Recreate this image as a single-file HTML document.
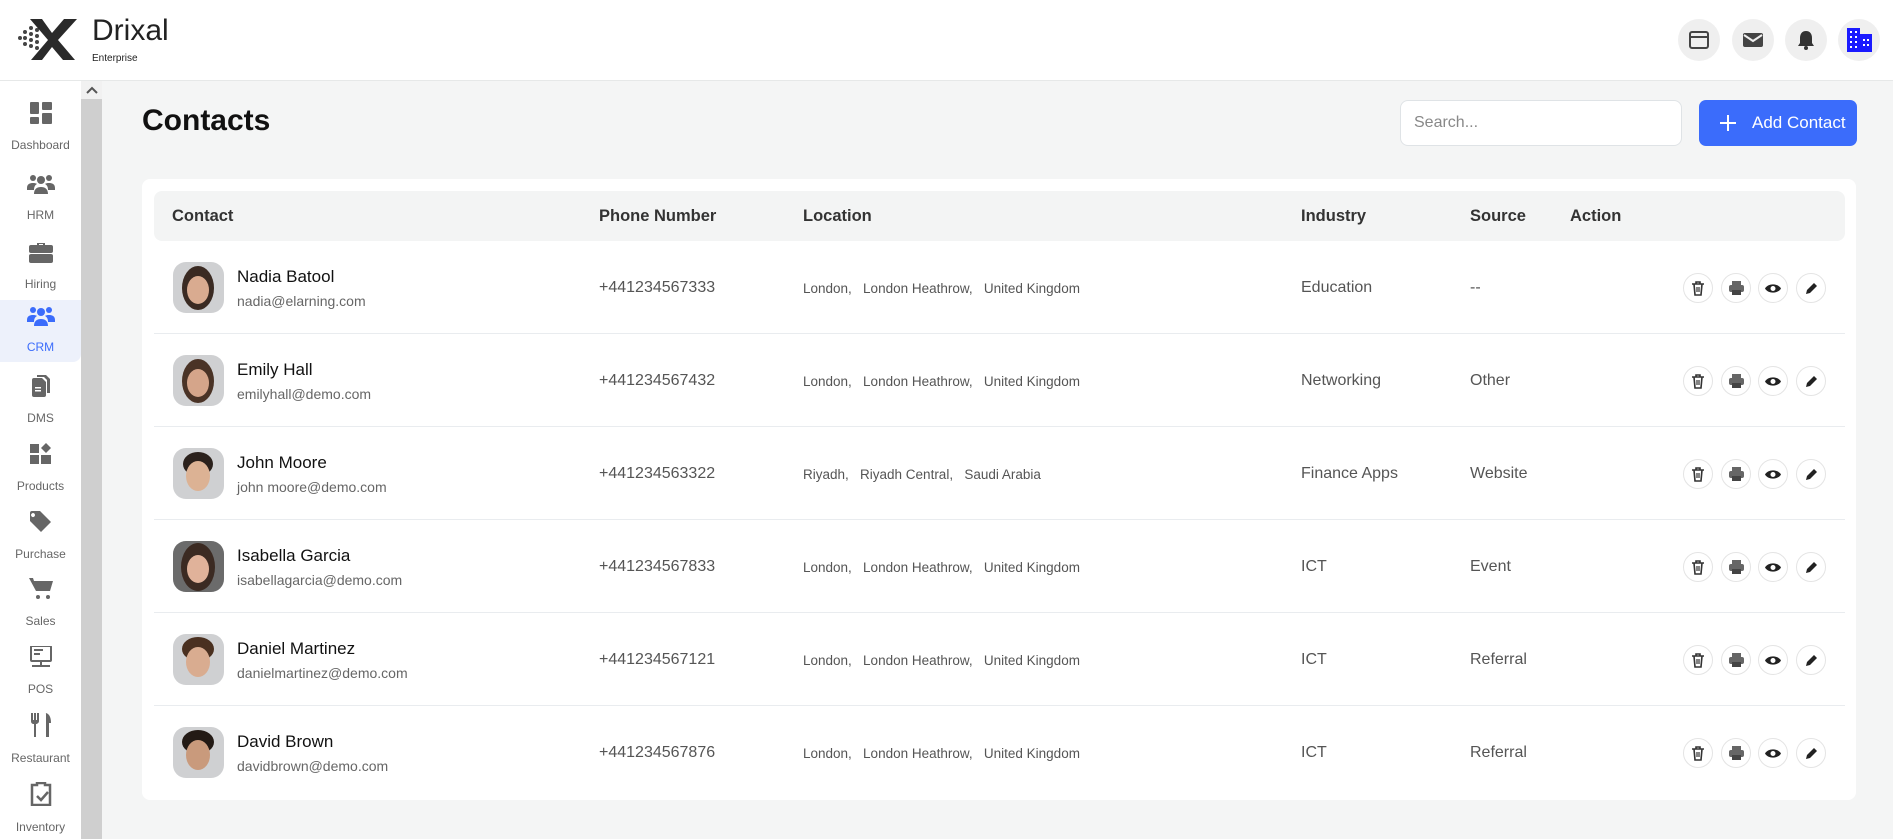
<!DOCTYPE html>
<html><head><meta charset="utf-8"><style>
*{box-sizing:border-box;margin:0;padding:0}
body{width:1893px;height:839px;overflow:hidden;background:#f4f5f5;font-family:"Liberation Sans",sans-serif;position:relative;color:#222}
.abs{position:absolute}
#hdr{left:0;top:0;width:1893px;height:81px;background:#fff;border-bottom:1px solid #e6e8e8}
.hic{width:42px;height:42px;border-radius:50%;background:#efefef;top:19px;display:flex;align-items:center;justify-content:center}
#side{left:0;top:81px;width:81px;height:758px;background:#fff}
#sb{left:81px;top:81px;width:21px;height:758px;background:#cfcfcf}
.si{position:absolute;left:0;width:81px;text-align:center;font-size:12px;color:#666}
.si svg{display:block;margin:0 auto 14px}
#card{left:142px;top:179px;width:1714px;height:621px;background:#fff;border-radius:8px}
#th{left:154px;top:191px;width:1691px;height:50px;background:#f3f4f4;border-radius:8px;font-weight:bold;font-size:16.5px;color:#333}
#th span{position:absolute;top:16px}
.row{position:absolute;left:154px;width:1691px;height:93px;border-bottom:1px solid #e9ecef}
.av{position:absolute;left:19px;top:21px;width:51px;height:51px;border-radius:13px;background:#cfd0d2;overflow:hidden}
.nm{position:absolute;left:83px;top:26px;font-size:17px;color:#111}
.em{position:absolute;left:83px;top:52px;font-size:14px;color:#666}
.ph{position:absolute;left:445px;top:38px;font-size:16px;color:#555}
.lo{position:absolute;left:649px;top:40px;font-size:13.5px;color:#555}
.in{position:absolute;left:1147px;top:38px;font-size:16px;color:#555}
.so{position:absolute;left:1316px;top:38px;font-size:16px;color:#555}
.ab{position:absolute;top:32px;width:30px;height:30px;border-radius:50%;border:1px solid #e4e4e4;display:flex;align-items:center;justify-content:center}
</style></head><body>
<div id="hdr" class="abs">
 <svg class="abs" style="left:16px;top:16px" width="64" height="46" viewBox="0 0 64 46">
  <g fill="#444"><circle cx="4" cy="22" r="2"/><circle cx="9" cy="16" r="2"/><circle cx="9" cy="22" r="2"/><circle cx="9" cy="28" r="2"/><circle cx="15" cy="12" r="2"/><circle cx="15" cy="18" r="2"/><circle cx="15" cy="24" r="2"/><circle cx="15" cy="30" r="2"/><circle cx="21" cy="14" r="2"/><circle cx="21" cy="20" r="2"/><circle cx="21" cy="26" r="2"/><circle cx="21" cy="32" r="2"/></g>
  <path d="M14 3h12l10 14L48 3h13L42 24l17 20H47L36 31 26 44H15l17-20z" fill="#2a2a2a"/>
 </svg>
 <div class="abs" style="left:92px;top:14px;font-size:30px;font-weight:500;color:#222">Drixal</div>
 <div class="abs" style="left:92px;top:53px;font-size:10px;color:#222">Enterprise</div>
 <div class="hic abs" style="left:1678px"><svg width="22" height="20" viewBox="0 0 22 20"><rect x="2" y="2" width="18" height="16" rx="2" fill="none" stroke="#444" stroke-width="2"/><path d="M2 7h18" stroke="#444" stroke-width="2"/></svg></div>
 <div class="hic abs" style="left:1732px"><svg width="20" height="16" viewBox="0 0 20 16"><rect x="0" y="1" width="20" height="14" rx="2" fill="#444"/><path d="M1 3l9 6 9-6" stroke="#efefef" stroke-width="2" fill="none"/></svg></div>
 <div class="hic abs" style="left:1785px"><svg width="18" height="20" viewBox="0 0 18 20"><path d="M9 1c-4 0-6 3-6 7v5l-2 3h16l-2-3V8c0-4-2-7-6-7z" fill="#333"/><circle cx="9" cy="18" r="2" fill="#333"/></svg></div>
 <div class="hic abs" style="left:1838px"><svg width="28" height="26" viewBox="0 0 28 26"><path d="M2 1h13v6h12v18H2z" fill="#1a1aff"/><g fill="#fff"><rect x="5" y="4" width="2" height="2"/><rect x="10" y="4" width="2" height="2"/><rect x="5" y="9" width="2" height="2"/><rect x="10" y="9" width="2" height="2"/><rect x="5" y="14" width="2" height="2"/><rect x="10" y="14" width="2" height="2"/><rect x="5" y="19" width="2" height="2"/><rect x="10" y="19" width="2" height="2"/><rect x="18" y="12" width="2" height="2"/><rect x="22" y="12" width="2" height="2"/><rect x="18" y="17" width="2" height="2"/><rect x="22" y="17" width="2" height="2"/></g></svg></div>
</div>
<div id="side" class="abs">
 <div class="abs" style="left:0;top:219px;width:81px;height:62px;background:#edf1fb;border-radius:0 0 8px 0"></div>
 <div class="si" style="top:21px"><svg width="22" height="22" viewBox="0 0 22 22" fill="#666"><rect x="0" y="0" width="9" height="12" rx="1"/><rect x="12" y="0" width="10" height="8" rx="1"/><rect x="0" y="15" width="9" height="7" rx="1"/><rect x="12" y="11" width="10" height="11" rx="1"/></svg>Dashboard</div>
 <div class="si" style="top:93px"><svg width="28" height="20" viewBox="0 0 28 20" fill="#666"><circle cx="6" cy="4" r="3"/><circle cx="22" cy="4" r="3"/><circle cx="14" cy="6" r="4"/><path d="M0 14c0-4 3-5 6-5s4 1 4 1c-2 1-3 3-3 6H0zM28 14c0-4-3-5-6-5s-4 1-4 1c2 1 3 3 3 6h7zM7 20c0-5 3-7 7-7s7 2 7 7z"/></svg>HRM</div>
 <div class="si" style="top:160px"><svg width="24" height="22" viewBox="0 0 24 22" fill="#666"><path d="M8 4V2h8v2h-2V3h-4v1z"/><rect x="0" y="4" width="24" height="8" rx="2"/><rect x="0" y="13" width="24" height="9" rx="2"/></svg>Hiring</div>
 <div class="si" style="top:225px;color:#3b6cfb"><svg width="28" height="20" viewBox="0 0 28 20" fill="#3b6cfb"><circle cx="6" cy="4" r="3"/><circle cx="22" cy="4" r="3"/><circle cx="14" cy="6" r="4"/><path d="M0 14c0-4 3-5 6-5s4 1 4 1c-2 1-3 3-3 6H0zM28 14c0-4-3-5-6-5s-4 1-4 1c2 1 3 3 3 6h7zM7 20c0-5 3-7 7-7s7 2 7 7z"/></svg>CRM</div>
 <div class="si" style="top:294px"><svg width="18" height="22" viewBox="0 0 18 22" fill="#666"><path d="M5 0h9l4 4v14h-3V5l-3-3H5z"/><path d="M0 5a2 2 0 012-2h8l4 4v13a2 2 0 01-2 2H2a2 2 0 01-2-2z"/><rect x="3" y="12" width="6" height="1.5" fill="#fff"/><rect x="3" y="15" width="6" height="1.5" fill="#fff"/></svg>DMS</div>
 <div class="si" style="top:362px"><svg width="22" height="22" viewBox="0 0 22 22" fill="#666"><rect x="0" y="1" width="9" height="9"/><rect x="0" y="12" width="9" height="9"/><rect x="11" y="12" width="10" height="9"/><path d="M16 0l5 5-5 5-5-5z"/></svg>Products</div>
 <div class="si" style="top:430px"><svg width="22" height="22" viewBox="0 0 22 22" fill="#666"><path d="M0 2a2 2 0 012-2h8l11 11-10 10L0 10zM5 4a2 2 0 100 .1z"/></svg>Purchase</div>
 <div class="si" style="top:497px"><svg width="24" height="22" viewBox="0 0 24 22" fill="#666"><path d="M0 0h4l1 3h19l-3 10H7z"/><circle cx="9" cy="19" r="2"/><circle cx="19" cy="19" r="2"/></svg>Sales</div>
 <div class="si" style="top:565px"><svg width="22" height="22" viewBox="0 0 22 22" fill="#666"><rect x="1" y="0" width="20" height="15" rx="1" fill="none" stroke="#666" stroke-width="2"/><rect x="4" y="3" width="9" height="2"/><rect x="4" y="7" width="6" height="2"/><rect x="10" y="15" width="2" height="4"/><rect x="2" y="19" width="18" height="2"/></svg>POS</div>
 <div class="si" style="top:632px"><svg width="22" height="24" viewBox="0 0 22 24" fill="#666"><path d="M1 0h2v7h1V0h2v7h1V0h2v8c0 2-2 3-3 3v13H4V11C2 11 1 10 1 8z"/><path d="M15 0c4 0 6 4 6 10h-2v14h-3V0z"/></svg>Restaurant</div>
 <div class="si" style="top:701px"><svg width="22" height="24" viewBox="0 0 22 24" fill="#666"><path d="M2 3h5V1h8v2h5v20H2z" fill="none" stroke="#666" stroke-width="2.5"/><path d="M7 14l4 4 7-8" stroke="#666" stroke-width="2.5" fill="none"/></svg>Inventory</div>
</div>
<div id="sb" class="abs"><div style="height:18px;background:#f1f1f1;text-align:center"><svg width="12" height="8" viewBox="0 0 12 8" style="margin-top:5px"><path d="M1 7l5-5 5 5" stroke="#555" stroke-width="2" fill="none"/></svg></div></div>

<div class="abs" style="left:142px;top:104px;font-size:30px;font-weight:bold;color:#111">Contacts</div>
<div class="abs" style="left:1400px;top:100px;width:282px;height:46px;background:#fff;border:1px solid #dfe3e6;border-radius:8px;font-size:16px;color:#888;padding:13px 0 0 13px">Search...</div>
<div class="abs" style="left:1699px;top:100px;width:158px;height:46px;background:#3b6cfb;border-radius:7px;color:#fff;font-size:17px;display:flex;align-items:center"><svg width="18" height="18" viewBox="0 0 18 18" style="margin:0 15px 0 20px"><path d="M9 1v16M1 9h16" stroke="#fff" stroke-width="2"/></svg>Add Contact</div>

<div id="card" class="abs"></div>
<div id="th" class="abs"><span style="left:18px">Contact</span><span style="left:445px">Phone Number</span><span style="left:649px">Location</span><span style="left:1147px">Industry</span><span style="left:1316px">Source</span><span style="left:1416px">Action</span></div>

<div id="rows" class="abs" style="left:0;top:241px;width:1893px">
<div class="row" style="top:0"><div class="av"><svg width="51" height="51"><ellipse cx="25" cy="26" rx="16" ry="22" fill="#3a2a22"/><ellipse cx="25" cy="28" rx="11" ry="14" fill="#d9ab90"/></svg></div><div class="nm">Nadia Batool</div><div class="em">nadia@elarning.com</div><div class="ph">+441234567333</div><div class="lo">London,&nbsp;&nbsp; London Heathrow,&nbsp;&nbsp; United Kingdom</div><div class="in">Education</div><div class="so">--</div>
<div class="ab" style="left:1529px"><svg width="14" height="15" viewBox="0 0 14 15"><path d="M1 3h12M5 3V1h4v2M3 3l1 11h6l1-11" stroke="#333" stroke-width="1.6" fill="none"/><path d="M6 6v5M8 6v5" stroke="#333" stroke-width="1.2"/></svg></div><div class="ab" style="left:1567px"><svg width="15" height="14" viewBox="0 0 15 14" fill="#666"><rect x="3" y="0" width="9" height="4"/><rect x="0" y="4" width="15" height="7" rx="2"/><rect x="3" y="9" width="9" height="5" fill="#444"/></svg></div><div class="ab" style="left:1604px"><svg width="16" height="11" viewBox="0 0 16 11"><path d="M0 5.5C3 0 13 0 16 5.5 13 11 3 11 0 5.5z" fill="#222"/><circle cx="8" cy="5.5" r="2.5" fill="#fff"/></svg></div><div class="ab" style="left:1642px"><svg width="13" height="13" viewBox="0 0 13 13"><path d="M1 12l1-4 7-7 3 3-7 7z" fill="#222"/></svg></div></div>

<div class="row" style="top:93px"><div class="av"><svg width="51" height="51"><ellipse cx="25" cy="26" rx="16" ry="22" fill="#4a3326"/><ellipse cx="25" cy="28" rx="11" ry="14" fill="#d5a58a"/></svg></div><div class="nm">Emily Hall</div><div class="em">emilyhall@demo.com</div><div class="ph">+441234567432</div><div class="lo">London,&nbsp;&nbsp; London Heathrow,&nbsp;&nbsp; United Kingdom</div><div class="in">Networking</div><div class="so">Other</div>
<div class="ab" style="left:1529px"><svg width="14" height="15" viewBox="0 0 14 15"><path d="M1 3h12M5 3V1h4v2M3 3l1 11h6l1-11" stroke="#333" stroke-width="1.6" fill="none"/><path d="M6 6v5M8 6v5" stroke="#333" stroke-width="1.2"/></svg></div><div class="ab" style="left:1567px"><svg width="15" height="14" viewBox="0 0 15 14" fill="#666"><rect x="3" y="0" width="9" height="4"/><rect x="0" y="4" width="15" height="7" rx="2"/><rect x="3" y="9" width="9" height="5" fill="#444"/></svg></div><div class="ab" style="left:1604px"><svg width="16" height="11" viewBox="0 0 16 11"><path d="M0 5.5C3 0 13 0 16 5.5 13 11 3 11 0 5.5z" fill="#222"/><circle cx="8" cy="5.5" r="2.5" fill="#fff"/></svg></div><div class="ab" style="left:1642px"><svg width="13" height="13" viewBox="0 0 13 13"><path d="M1 12l1-4 7-7 3 3-7 7z" fill="#222"/></svg></div></div>

<div class="row" style="top:186px"><div class="av"><svg width="51" height="51"><ellipse cx="25" cy="16" rx="15" ry="12" fill="#2b211c"/><ellipse cx="25" cy="28" rx="12" ry="15" fill="#dcb294"/></svg></div><div class="nm">John Moore</div><div class="em">john moore@demo.com</div><div class="ph">+441234563322</div><div class="lo">Riyadh,&nbsp;&nbsp; Riyadh Central,&nbsp;&nbsp; Saudi Arabia</div><div class="in">Finance Apps</div><div class="so">Website</div>
<div class="ab" style="left:1529px"><svg width="14" height="15" viewBox="0 0 14 15"><path d="M1 3h12M5 3V1h4v2M3 3l1 11h6l1-11" stroke="#333" stroke-width="1.6" fill="none"/><path d="M6 6v5M8 6v5" stroke="#333" stroke-width="1.2"/></svg></div><div class="ab" style="left:1567px"><svg width="15" height="14" viewBox="0 0 15 14" fill="#666"><rect x="3" y="0" width="9" height="4"/><rect x="0" y="4" width="15" height="7" rx="2"/><rect x="3" y="9" width="9" height="5" fill="#444"/></svg></div><div class="ab" style="left:1604px"><svg width="16" height="11" viewBox="0 0 16 11"><path d="M0 5.5C3 0 13 0 16 5.5 13 11 3 11 0 5.5z" fill="#222"/><circle cx="8" cy="5.5" r="2.5" fill="#fff"/></svg></div><div class="ab" style="left:1642px"><svg width="13" height="13" viewBox="0 0 13 13"><path d="M1 12l1-4 7-7 3 3-7 7z" fill="#222"/></svg></div></div>

<div class="row" style="top:279px"><div class="av"><svg width="51" height="51"><rect width="51" height="51" fill="#6b6b6b"/><ellipse cx="25" cy="26" rx="17" ry="24" fill="#3b2a22"/><ellipse cx="25" cy="28" rx="11" ry="14" fill="#e0b29a"/></svg></div><div class="nm">Isabella Garcia</div><div class="em">isabellagarcia@demo.com</div><div class="ph">+441234567833</div><div class="lo">London,&nbsp;&nbsp; London Heathrow,&nbsp;&nbsp; United Kingdom</div><div class="in">ICT</div><div class="so">Event</div>
<div class="ab" style="left:1529px"><svg width="14" height="15" viewBox="0 0 14 15"><path d="M1 3h12M5 3V1h4v2M3 3l1 11h6l1-11" stroke="#333" stroke-width="1.6" fill="none"/><path d="M6 6v5M8 6v5" stroke="#333" stroke-width="1.2"/></svg></div><div class="ab" style="left:1567px"><svg width="15" height="14" viewBox="0 0 15 14" fill="#666"><rect x="3" y="0" width="9" height="4"/><rect x="0" y="4" width="15" height="7" rx="2"/><rect x="3" y="9" width="9" height="5" fill="#444"/></svg></div><div class="ab" style="left:1604px"><svg width="16" height="11" viewBox="0 0 16 11"><path d="M0 5.5C3 0 13 0 16 5.5 13 11 3 11 0 5.5z" fill="#222"/><circle cx="8" cy="5.5" r="2.5" fill="#fff"/></svg></div><div class="ab" style="left:1642px"><svg width="13" height="13" viewBox="0 0 13 13"><path d="M1 12l1-4 7-7 3 3-7 7z" fill="#222"/></svg></div></div>

<div class="row" style="top:372px"><div class="av"><svg width="51" height="51"><ellipse cx="25" cy="15" rx="16" ry="12" fill="#4a3020"/><ellipse cx="25" cy="28" rx="12" ry="15" fill="#d9ac90"/></svg></div><div class="nm">Daniel Martinez</div><div class="em">danielmartinez@demo.com</div><div class="ph">+441234567121</div><div class="lo">London,&nbsp;&nbsp; London Heathrow,&nbsp;&nbsp; United Kingdom</div><div class="in">ICT</div><div class="so">Referral</div>
<div class="ab" style="left:1529px"><svg width="14" height="15" viewBox="0 0 14 15"><path d="M1 3h12M5 3V1h4v2M3 3l1 11h6l1-11" stroke="#333" stroke-width="1.6" fill="none"/><path d="M6 6v5M8 6v5" stroke="#333" stroke-width="1.2"/></svg></div><div class="ab" style="left:1567px"><svg width="15" height="14" viewBox="0 0 15 14" fill="#666"><rect x="3" y="0" width="9" height="4"/><rect x="0" y="4" width="15" height="7" rx="2"/><rect x="3" y="9" width="9" height="5" fill="#444"/></svg></div><div class="ab" style="left:1604px"><svg width="16" height="11" viewBox="0 0 16 11"><path d="M0 5.5C3 0 13 0 16 5.5 13 11 3 11 0 5.5z" fill="#222"/><circle cx="8" cy="5.5" r="2.5" fill="#fff"/></svg></div><div class="ab" style="left:1642px"><svg width="13" height="13" viewBox="0 0 13 13"><path d="M1 12l1-4 7-7 3 3-7 7z" fill="#222"/></svg></div></div>

<div class="row" style="top:465px;border-bottom:none"><div class="av"><svg width="51" height="51"><ellipse cx="25" cy="15" rx="16" ry="12" fill="#231a15"/><ellipse cx="25" cy="28" rx="12" ry="15" fill="#c99a7c"/></svg></div><div class="nm">David Brown</div><div class="em">davidbrown@demo.com</div><div class="ph">+441234567876</div><div class="lo">London,&nbsp;&nbsp; London Heathrow,&nbsp;&nbsp; United Kingdom</div><div class="in">ICT</div><div class="so">Referral</div>
<div class="ab" style="left:1529px"><svg width="14" height="15" viewBox="0 0 14 15"><path d="M1 3h12M5 3V1h4v2M3 3l1 11h6l1-11" stroke="#333" stroke-width="1.6" fill="none"/><path d="M6 6v5M8 6v5" stroke="#333" stroke-width="1.2"/></svg></div><div class="ab" style="left:1567px"><svg width="15" height="14" viewBox="0 0 15 14" fill="#666"><rect x="3" y="0" width="9" height="4"/><rect x="0" y="4" width="15" height="7" rx="2"/><rect x="3" y="9" width="9" height="5" fill="#444"/></svg></div><div class="ab" style="left:1604px"><svg width="16" height="11" viewBox="0 0 16 11"><path d="M0 5.5C3 0 13 0 16 5.5 13 11 3 11 0 5.5z" fill="#222"/><circle cx="8" cy="5.5" r="2.5" fill="#fff"/></svg></div><div class="ab" style="left:1642px"><svg width="13" height="13" viewBox="0 0 13 13"><path d="M1 12l1-4 7-7 3 3-7 7z" fill="#222"/></svg></div></div>
</div>
</body></html>
